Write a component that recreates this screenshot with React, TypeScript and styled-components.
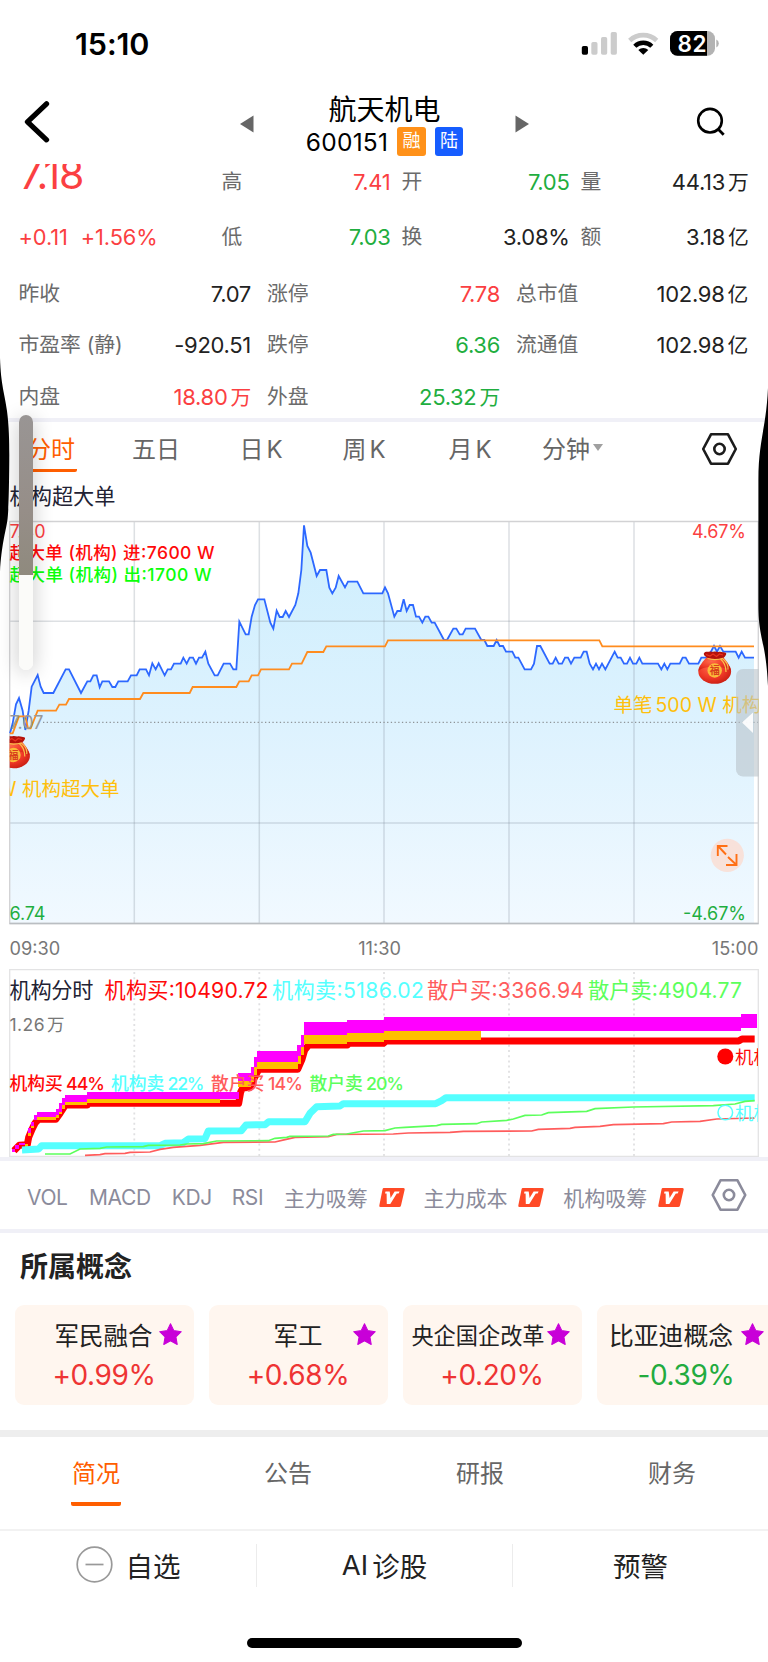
import React from 'react';
import styled, { createGlobalStyle, css } from 'styled-components';

const RED = '#fb3f42';
const GREEN = '#1fae3f';
const INK = '#222';
const ORANGE = '#ff5e00';
const FONT = 'Inter, "Noto Sans CJK SC", sans-serif';

const Global = createGlobalStyle`
  *, *::before, *::after { box-sizing: border-box; }
  html, body { margin: 0; background: #fff; }
  body { font-family: ${FONT}; color: ${INK}; -webkit-font-smoothing: antialiased; }
`;

const Screen = styled.main`
  position: relative;
  display: flex;
  flex-direction: column;
  width: 768px;
  height: 1662px;
  overflow: hidden;
  background: #fff;
`;

/* ---------- status bar ---------- */

const StatusBar = styled.header`
  display: flex;
  justify-content: space-between;
  height: 88px;
  padding: 0 48px 0 75px;
`;

const Clock = styled.div`
  padding-top: 26px;
  font-size: 30.5px;
  line-height: 36px;
  font-weight: 600;
  letter-spacing: -0.1px;
  color: #000;
`;

const StatusIcons = styled.svg`
  display: block;
  width: 140px;
  height: 88px;
`;

/* ---------- title bar ---------- */

const TitleBar = styled.div`
  display: grid;
  grid-template-columns: 240px 14px 261px 14px 239px;
  height: 76px;
`;

const TitleIcon = styled.svg`
  display: block;
  height: 76px;
  width: 100%;
`;

const TitleBlock = styled.div`
  display: flex;
  flex-direction: column;
  align-items: center;
  color: #000;
`;

const StockName = styled.h1`
  margin: 4px 0 -1px;
  font-size: 28px;
  line-height: 36px;
  font-weight: 400;
`;

const CodeLine = styled.div`
  display: flex;
  align-items: center;
  height: 29px;
  font-size: 24.5px;
  letter-spacing: 0.25px;
`;

const Badge = styled.span<{ $bg: string; $gap: number }>`
  width: 28.5px;
  height: 29px;
  margin-left: ${p => p.$gap}px;
  border-radius: 3px;
  background: ${p => p.$bg};
  color: #fff;
  font-size: 18px;
  line-height: 28px;
  letter-spacing: 0;
  text-align: center;
`;

/* ---------- quote table ---------- */

const Quote = styled.section`
  height: 254px;
  overflow: hidden;
`;

const QuoteRow = styled.div<{ $wide?: boolean; $h: number }>`
  display: grid;
  grid-template-columns: ${p =>
    p.$wide ? '232.5px 233px 232px' : '187px 174px 168px 168px'};
  column-gap: ${p => (p.$wide ? '16px' : '11px')};
  align-items: end;
  height: ${p => p.$h}px;
  padding: 0 19px 0 18.5px;
`;

const Cell = styled.div<{ $indent?: number }>`
  display: flex;
  justify-content: space-between;
  align-items: center;
  height: 32px;
  padding-left: ${p => p.$indent ?? 0}px;
  white-space: nowrap;
`;

const Label = styled.span`
  font-size: 20.8px;
  line-height: 32px;
  color: #6b6b6b;
`;

const Value = styled.span<{ $c?: string }>`
  font-size: 22px;
  line-height: 32px;
  letter-spacing: -0.3px;
  color: ${p => p.$c ?? INK};
`;

const Unit = styled.span`
  margin-left: 3px;
  font-size: 20.8px;
`;

const Price = styled.div`
  height: 32px;
  padding-left: 1px;
  font-size: 41px;
  line-height: 16px;
  letter-spacing: -1.2px;
  color: ${RED};
`;

const Change = styled.div`
  display: flex;
  gap: 13px;
  font-size: 21.8px;
  line-height: 32px;
  letter-spacing: -0.1px;
  color: ${RED};
`;

const Rule = styled.div<{ $h?: number; $c?: string }>`
  flex: none;
  height: ${p => p.$h ?? 4}px;
  background: ${p => p.$c ?? '#f0f0f7'};
`;

/* ---------- period tabs ---------- */

const PeriodTabs = styled.nav`
  display: grid;
  grid-template-columns: 105px 107.5px 103px 106px 93.5px 160px 1fr;
  height: 54px;
  padding-left: 27px;
`;

const Period = styled.div<{ $on?: boolean }>`
  display: flex;
  align-items: flex-start;
  gap: 3px;
  height: 50px;
  font-size: 24px;
  line-height: 55px;
  color: ${p => (p.$on ? ORANGE : '#666')};
`;

const PeriodText = styled.span<{ $on?: boolean }>`
  height: 50px;
  ${p =>
    p.$on &&
    css`
      border-bottom: 3.5px solid ${ORANGE};
      border-radius: 2px;
      padding-right: 2px;
    `}
`;

const Caret = styled.span`
  align-self: center;
  width: 0;
  margin-left: 0;
  border: 5px solid transparent;
  border-top: 7px solid #a0a0a0;
  border-bottom: 0;
`;

const ChartTitle = styled.div`
  height: 39px;
  padding-left: 9.5px;
  font-size: 21.2px;
  line-height: 41px;
  color: #222233;
`;

const Plot = styled.svg`
  display: block;
  flex: none;
  width: 768px;
  font-family: ${FONT};
`;

const TimeAxis = styled.div`
  display: grid;
  grid-template-columns: 250px 240px 1fr;
  height: 34px;
  padding: 0 9.5px;
  font-size: 18.2px;
  line-height: 34px;
  color: #777;
`;

const Tick = styled.span<{ $align: string }>`
  text-align: ${p => p.$align};
`;

/* ---------- indicators ---------- */

const Indicators = styled.nav`
  display: flex;
  align-items: center;
  height: 68px;
  padding: 4px 21px 0 27px;
  font-size: 21px;
  color: #8b8b9b;
`;

const Indicator = styled.span<{ $w: number; $ls?: number }>`
  display: flex;
  align-items: center;
  width: ${p => p.$w}px;
  white-space: nowrap;
  letter-spacing: ${p => p.$ls ?? 0}px;
`;

const VipIcon = styled.svg`
  width: 26px;
  height: 19px;
  margin-left: 11px;
`;

const IndicatorGear = styled.svg`
  width: 36px;
  height: 36px;
  margin: -5px 0 0 1px;
`;

/* ---------- concepts ---------- */

const SectionTitle = styled.h2`
  margin: 0;
  height: 72px;
  padding-left: 20px;
  font-size: 28px;
  line-height: 69px;
  font-weight: 700;
`;

const Cards = styled.div`
  display: flex;
  gap: 15px;
  height: 125px;
  padding-left: 14.5px;
`;

const Card = styled.article`
  position: relative;
  display: flex;
  flex: none;
  flex-direction: column;
  align-items: center;
  width: 179px;
  height: 100px;
  padding-top: 10px;
  border-radius: 9px;
  background: #fff6ef;
`;

const CardName = styled.div<{ $size: number; $pad: number }>`
  padding-right: ${p => p.$pad}px;
  font-size: ${p => p.$size}px;
  line-height: 42px;
  white-space: nowrap;
`;

const CardPct = styled.div<{ $c: string }>`
  font-size: 28px;
  line-height: 36px;
  letter-spacing: -0.4px;
  color: ${p => p.$c};
`;

const Star = styled.svg`
  position: absolute;
  top: 18px;
  right: 12px;
  width: 23px;
  height: 23px;
`;

/* ---------- bottom tabs and actions ---------- */

const InfoTabs = styled.nav`
  display: grid;
  grid-template-columns: repeat(4, 192px);
  justify-items: center;
  height: 92px;
`;

const InfoTab = styled.div<{ $on?: boolean }>`
  height: 69px;
  padding: 0 1px;
  font-size: 24px;
  line-height: 73px;
  color: ${p => (p.$on ? ORANGE : '#666')};
  ${p => p.$on && `border-bottom: 4px solid ${ORANGE}; border-radius: 2px;`}
`;

const Actions = styled.div`
  display: grid;
  grid-template-columns: repeat(3, 256px);
  height: 70px;
  padding-top: 13px;
`;

const Action = styled.div`
  display: flex;
  align-items: center;
  justify-content: center;
  gap: 4px;
  height: 43px;
  padding-bottom: 2px;
  font-size: 27.5px;
  & + & { border-left: 1px solid #ececec; }
`;

const MinusIcon = styled.svg`
  width: 37px;
  height: 37px;
  margin-right: 9px;
`;

const HomeBar = styled.div`
  width: 274.5px;
  height: 9.5px;
  margin: 37px 0 0 247px;
  border-radius: 5px;
  background: #000;
`;

/* ---------- overlays ---------- */

const VolumeSlider = styled.div`
  position: absolute;
  left: 19.3px;
  top: 414.5px;
  width: 13.7px;
  height: 255px;
  border-radius: 7px;
  overflow: hidden;
  background: #fbfbf9;
`;

const VolumeShadow = styled.div`
  position: absolute;
  left: 19.3px;
  top: 414.5px;
  width: 13.7px;
  height: 255px;
  border-radius: 7px;
  box-shadow: 0 3px 20px rgba(0, 0, 0, 0.24);
`;

const VolumeLevel = styled.div`
  height: 160px;
  background: linear-gradient(#999594, #968e88 60%, #8f8a7e);
`;

const EdgeShapes = styled.svg`
  position: absolute;
  left: 0;
  top: 340px;
  width: 768px;
  height: 360px;
  pointer-events: none;
`;

/* ---------- chart data, in thirds of a pixel ---------- */

type Pt = [number, number];

const parse = (s: string, dx = 0, dy = 0): Pt[] =>
  s.trim().split(/\s+/).map(p => {
    const [x, y] = p.split(',').map(Number);
    return [x + dx, y + dy] as Pt;
  });
const toPath = (pts: Pt[]) => 'M' + pts.map(p => p.join(' ')).join('L');

const PRICE_OPEN = `30,220 38,190 48,133 57,114 68,152 76,210 86,152 95,80 113,45 122,80 131,99 160,99 197,28 207,28
 243,99 262,64 271,64 280,46 290,46 299,82 307,64 327,64 337,81 346,81 355,64 383,64 393,46 410,46 419,28 438,28
 447,46 457,10 467,28 476,10 494,46`;
const PRICE_MORNING = `503,808 513,808 522,791 542,791 550,773 560,791 569,773 579,773 588,791 597,773 606,773 616,755
 625,791 644,826 653,826 671,791 690,791 700,808 709,808 718,665 737,703 746,703 755,650 765,615 774,598 793,598
 811,668 820,686 830,632 839,651 848,651 857,633 867,651 886,615 895,580 904,510 912,376 922,438 932,458 950,528
 960,510 979,510 988,563 997,580 1007,563 1016,528 1035,562 1044,545 1072,545 1090,580 1147,580`;
const PRICE_AFTERNOON = `51,562 60,580 79,650 88,633 98,633 107,598 116,633 125,615 135,615 144,650 153,650 163,668
 172,650 181,650 191,668 200,668 228,720 237,720 256,686 265,686 275,703 284,703 293,686 321,686 340,720 349,720
 358,738 377,738 386,720 395,738 405,738 414,755 433,755 442,773 451,773 470,808 489,808 498,791 507,738 517,738
 545,791 554,791 563,773 572,791 582,791 591,773 600,773 609,791 619,773 638,773 647,755 656,755 665,791 675,808
 684,791 693,808 702,791 712,808 740,755 749,773 758,773 768,791 777,791 786,773 795,791 805,791 814,773 823,791
 870,791 880,808 889,791 898,808 907,791 935,791 944,773 953,773 963,791 991,791 1000,773 1019,773 1038,738
 1047,755 1056,738 1066,755 1103,755 1112,773 1121,755 1131,773 1158,773`;
const price: Pt[] = [
  ...parse(PRICE_OPEN, 0, 780),
  ...parse(PRICE_MORNING),
  ...parse(PRICE_AFTERNOON, 1104),
];

const average: Pt[] = [
  ...parse(
    `30,220 38,220 57,169 76,169 84,205 92,205 113,152 168,152 178,134 198,134 207,117 420,117 430,99 569,99 578,81
     709,81 718,64 746,64 755,46 774,46 783,28 867,28 876,11 905,11 922,-24 970,-24 979,-41 1155,-41 1164,-59
     1798,-59 1807,-41 2262,-41`,
    0,
    780
  ),
];

const INST_BUY = `42,572 58,556 82,554 86,532 96,508 106,488 116,478 167,478 180,460 196,435 262,435 264,430 716,430
 722,396 728,384 750,382 764,352 776,328 893,328 906,298 914,270 926,255 1042,255 1046,250 1150,250 1158,243
 2216,243 2226,237 2264,237`;
const INST_SELL = `66,570 116,567 125,557 480,557 495,550 550,548 565,537 615,536 625,513 724,512 738,495 795,494
 806,485 915,485 930,460 950,440 1020,438 1030,431 1307,431 1325,422 1338,413 2264,413`;
const RETAIL_SELL = `135,582 210,582 240,567 300,565 320,561 430,560 445,556 540,555 560,552 610,551 650,543 805,542
 825,535 860,532 870,529 985,528 1000,523 1040,522 1090,513 1155,512 1185,504 1215,502 1310,497 1325,493 1430,491
 1445,486 1520,481 1540,477 1575,466 1625,465 1645,458 1760,454 1785,446 1900,441 2140,437 2205,432 2235,424
 2264,422`;
const RETAIL_BUY = `255,586 300,584 315,581 375,580 390,577 450,576 480,568 520,562 600,556 670,547 825,546 855,539
 885,532 985,530 1010,523 1180,522 1225,519 1350,517 1390,514 1595,513 1615,508 1710,505 1725,502 1800,499
 1840,494 1990,491 2015,486 2100,484 2150,477 2264,474`;

/* [x1, x2, top, bottom] */
const MAGENTA = [
  [36, 46, 566, 575], [46, 56, 556, 566], [56, 75, 549, 556], [83, 92, 505, 520], [92, 102, 485, 498],
  [102, 111, 465, 480], [110, 168, 456, 472], [168, 177, 446, 466], [177, 186, 430, 455], [186, 195, 413, 436],
  [194, 262, 405, 425], [261, 718, 397, 418], [715, 753, 339, 364], [752, 763, 322, 348], [762, 772, 291, 322],
  [771, 893, 273, 305], [892, 903, 256, 288], [902, 912, 226, 262], [911, 1042, 187, 226], [1041, 1153, 181, 220],
  [1152, 2224, 172, 212], [2222, 2270, 163, 204],
];
const GOLD = [
  [75, 84, 552, 560], [83, 92, 520, 528], [92, 102, 497, 505], [110, 168, 472, 480], [168, 177, 466, 473],
  [177, 186, 455, 463], [186, 195, 436, 446], [194, 262, 425, 436], [261, 660, 418, 430], [715, 753, 364, 381],
  [752, 763, 348, 365], [762, 772, 322, 345], [771, 893, 305, 328], [892, 903, 288, 312], [902, 912, 262, 286],
  [911, 1042, 226, 253], [1041, 1153, 220, 247], [1152, 1443, 212, 240],
];

const GRID_X = [134.3, 259.3, 384, 509, 634];

const Bars = ({ data, fill }: { data: number[][]; fill: string }) => (
  <g fill={fill} shapeRendering="crispEdges">
    {data.map(([a, b, t, u]) => (
      <rect key={a} x={a} y={t} width={b - a} height={u - t} />
    ))}
  </g>
);

const LuckyBag = ({ x, y }: { x: number; y: number }) => (
  <g transform={`translate(${x} ${y})`}>
    <ellipse cx="16.7" cy="20.500" rx="16.4" ry="12.300" fill="url(#bag)" />
    <path d="M9 6c-4 4-8 9-8.600 14C6 14 26 14 33 20 32 14 28 9 24 5z" fill="url(#bag)" />
    <path d="M6 2C7.500 0 9.500 1 11 .7c2-.8 3 .3 4.500 0 2-.5 3.500.1 5 .2 2-.5 3 .2 4.500.3 2 .2 4 .500 3 2.500-1 2-2 2.500-3 3.500-5 1.200-10 1.200-15-.2-2-1-5-3-4-5z" fill="#b5120c" />
    <path d="M8 3.500l4 1.500 3-2 3.500 2.500 3-2.500 3.500 1" fill="none" stroke="#e8321e" strokeWidth="1.300" />
    <path d="M9.500 7.500c5 1.400 11 1.200 15.500-.3M24.500 7.500c4 3 6 6 5.500 11M22.500 8c3.500 3 5.500 6 5.500 13" fill="none" stroke="#f8c24c" strokeWidth="1.200" />
    <circle cx="16.700" cy="19.500" r="7.200" fill="#fbbb3a" />
    <text x="16.700" y="23.300" fontSize="10" fontWeight="700" textAnchor="middle" fill="#d8401c">福</text>
  </g>
);

const HexNut = ({ cx, cy, color }: { cx: number; cy: number; color: string }) => (
  <g transform={`translate(${cx} ${cy})`} fill="none" stroke={color} strokeWidth="2.600" strokeLinejoin="round">
    <path d="M-8.500-14.700H8.500L16.300 0 8.500 14.700H-8.500L-16.300 0z" />
    <circle r="5.200" />
  </g>
);

const GearCell = styled.svg`
  display: block;
  width: 36px;
  height: 34px;
  margin-top: 9.5px;
`;

const VipMark = () => (
  <VipIcon viewBox="0 0 26 19">
    <path d="M4.500 0H24.500Q26 0 25.700 1.500L22 17.500Q21.700 19 20 19H1.500Q0 19 .3 17.500L3.500 1.500Q3.700 0 4.500 0z" fill="#ff4a26" />
    <path d="M6.500 3.500h4.200l.9 6.500 4-6.500h5l-1 2h-1.800L11.300 16H7.800L7.600 5.500H6z" fill="#fff" />
  </VipIcon>
);

const PriceChart = () => (
  <Plot height={416} viewBox="0 515 768 416">
    <defs>
      <linearGradient id="area" gradientUnits="userSpaceOnUse" x1="0" y1="372" x2="0" y2="1570">
        <stop offset="0" stopColor="#cdeefd" />
        <stop offset=".5" stopColor="#ddf2fe" />
        <stop offset="1" stopColor="#f1f9ff" />
      </linearGradient>
      <radialGradient id="bag" cx=".4" cy=".35" r=".7">
        <stop offset="0" stopColor="#ff6a4a" />
        <stop offset=".6" stopColor="#ee3726" />
        <stop offset="1" stopColor="#c81d12" />
      </radialGradient>
      <clipPath id="frame"><rect x="9.700" y="515" width="748.800" height="416" /></clipPath>
    </defs>
    <g transform="translate(0 400) scale(.333333)">
      <path d={toPath(price) + 'L2262 1570L30 1570Z'} fill="url(#area)" />
    </g>
    <g stroke="#788490" strokeOpacity=".25" strokeWidth="1.500" fill="none">
      {GRID_X.map(x => <path key={x} d={`M${x} 521.500V923.500`} />)}
      <path d="M9.700 621.300H758.500M9.700 823H758.500" />
    </g>
    <path d="M9.700 521.500H758.300V923.500H9.700z" fill="none" stroke="#d2d2d4" strokeWidth="1.300" />
    <path d="M9.700 923.500H758.500" stroke="#babec2" strokeWidth="1.300" />
    <path d="M43 722.300H758" stroke="#8f9498" strokeWidth="1.300" strokeDasharray="1.300 2.400" />
    <g transform="translate(0 400) scale(.333333)" fill="none" strokeWidth="5.400" strokeLinejoin="miter">
      <path d={toPath(price)} stroke="#2d68ff" />
      <path d={toPath(average)} stroke="#ff8c1e" />
    </g>
    <text x="9.500" y="729" fontSize="18" fill="#999" textLength="34">7.07</text>
    <g fontSize="18">
      <text x="9.500" y="537.500" fill={RED} textLength="36">7.40</text>
      <text x="746" y="537.500" fill={RED} textAnchor="end" textLength="54">4.67%</text>
      <text x="9.500" y="920" fill={GREEN} textLength="36">6.74</text>
      <text x="746" y="920" fill={GREEN} textAnchor="end" textLength="63">-4.67%</text>
    </g>
    <g fontSize="17.500" fontWeight="500">
      <text x="9.500" y="559" fill="#ff0a0a" textLength="205">超大单 (机构) 进:7600 W</text>
      <text x="9.500" y="580.500" fill="#0aff0a" textLength="202">超大单 (机构) 出:1700 W</text>
    </g>
    <g clipPath="url(#frame)">
      <LuckyBag x={-3.200} y={735.500} />
      <LuckyBag x={698} y={651} />
      <g fill="#ffbf0c" fontSize="19.500">
        <text x="119.500" y="796" textAnchor="end">W 机构超大单</text>
        <text x="613.500" y="711.500">单笔<tspan dx="3">500 W 机构超大单</tspan></text>
      </g>
    </g>
    <path d="M758.500 669H743a7 7 0 0 0-7 7V769.500a7 7 0 0 0 7 7H758.500z" fill="#b9c3ca" fillOpacity=".6" />
    <path d="M753 712.500V733L742 722.500z" fill="#fff" fillOpacity=".9" />
    <circle cx="727.300" cy="855.300" r="16.600" fill="#fadfd6" fillOpacity=".9" />
    <path d="M717.800 856V846H727.500M718 846L726 854.500M736.500 854V865H726M736 864.500L728 857" fill="none" stroke="#ff7015" strokeWidth="1.900" />
  </Plot>
);

const FlowChart = () => (
  <Plot height={192} viewBox="0 965 768 192">
    <defs>
      <clipPath id="flow"><rect x="9.700" y="965" width="748.300" height="192" /></clipPath>
    </defs>
    <path d="M9.700 1157V969.700H758.300V1157M9.700 1156.500H758.300" fill="none" stroke="#e3e3e4" strokeWidth="1.300" />
    <g stroke="#e0e0e2" strokeWidth="1.800" strokeDasharray="2 3.200">
      {GRID_X.map(x => <path key={x} d={`M${x} 972V1156`} />)}
    </g>
    <g transform="translate(0 960) scale(.333333)" fill="none">
      <path d={toPath(parse(INST_BUY))} stroke="#f00" strokeWidth="21" strokeLinejoin="round" />
      <Bars data={GOLD} fill="#ffbf00" />
      <Bars data={MAGENTA} fill="#f0f" />
      <path d={toPath(parse(INST_SELL))} stroke="#55ffff" strokeWidth="21" strokeLinejoin="round" />
      <path d={toPath(parse(RETAIL_BUY))} stroke="#ff5c5c" strokeWidth="5" />
      <path d={toPath(parse(RETAIL_SELL))} stroke="#5cff5c" strokeWidth="5" />
    </g>
    <g fontSize="21.200">
      <text x="9.500" y="998" fill="#222233" textLength="84">机构分时</text>
      <text x="104.500" y="998" fill="#ff0a0a" textLength="164">机构买:10490.72</text>
      <text x="272" y="998" fill="#55ffff" textLength="152">机构卖:5186.02</text>
      <text x="427" y="998" fill="#ff5c5c" textLength="157">散户买:3366.94</text>
      <text x="588" y="998" fill="#5cff5c" textLength="154">散户卖:4904.77</text>
    </g>
    <g fontSize="17.500" fill="#777">
      <text x="9.500" y="1031" textLength="35">1.26</text>
      <text x="47" y="1031" textLength="17">万</text>
    </g>
    <g fontSize="17.800" fontWeight="500">
      <text x="9.500" y="1090" fill="#ff0a0a">机构买</text>
      <text x="66" y="1090" fill="#ff0a0a" textLength="39">44%</text>
      <text x="111" y="1090" fill="#55ffff">机构卖</text>
      <text x="167.500" y="1090" fill="#55ffff" textLength="37">22%</text>
      <text x="211" y="1090" fill="#ff5c5c">散户买</text>
      <text x="268" y="1090" fill="#ff5c5c" textLength="35">14%</text>
      <text x="309.500" y="1090" fill="#5cff5c">散户卖</text>
      <text x="366" y="1090" fill="#5cff5c" textLength="38">20%</text>
    </g>
    <g clipPath="url(#flow)" fontSize="18.500">
      <circle cx="725.300" cy="1056.500" r="8" fill="#f00" />
      <text x="735" y="1063.500" fill="#ff0a0a">机构买</text>
      <circle cx="725.300" cy="1112.500" r="7.300" fill="none" stroke="#55ffff" strokeWidth="1.500" />
      <text x="735" y="1119.500" fill="#55ffff">机构卖</text>
    </g>
  </Plot>
);

const Num = ({ v, c }: { v: string; c?: string }) => {
  const unit = /[万亿]$/.test(v) ? v.slice(-1) : '';
  return (
    <Value $c={c}>
      {unit ? v.slice(0, -1) : v}
      {unit && <Unit>{unit}</Unit>}
    </Value>
  );
};

const Pair = ({ l, v, c, indent }: { l: string; v: string; c?: string; indent?: number }) => (
  <Cell $indent={indent}>
    <Label>{l}</Label>
    <Num v={v} c={c} />
  </Cell>
);

const CONCEPTS = [
  { name: '军民融合', pct: '+0.99%', size: 24.5, pad: 1 },
  { name: '军工', pct: '+0.68%', size: 24.5, pad: 0 },
  { name: '央企国企改革', pct: '+0.20%', size: 22.2, pad: 28 },
  { name: '比亚迪概念', pct: '-0.39%', size: 24.8, pad: 30 },
];

export default function App() {
  return (
    <>
      <Global />
      <Screen>
        <StatusBar>
          <Clock>15:10</Clock>
          <StatusIcons viewBox="580 0 140 88">
            <rect x="581.800" y="46" width="6.200" height="8.800" rx="1.700" fill="#000" />
            <rect x="591.300" y="42" width="6.200" height="12.800" rx="1.700" fill="#ccc" />
            <rect x="601" y="37" width="6.200" height="17.800" rx="1.700" fill="#ccc" />
            <rect x="610.700" y="32" width="6.200" height="22.800" rx="1.700" fill="#ccc" />
            <path d="M629.700 40.500a19.700 19.700 0 0 1 27 0" fill="none" stroke="#ccc" strokeWidth="4.600" />
            <path d="M634.800 46.300a12 12 0 0 1 17 0" fill="none" stroke="#000" strokeWidth="4.400" />
            <path d="M643.300 54.800L638.300 50a7.200 7.200 0 0 1 10 0z" fill="#000" />
            <clipPath id="battery"><rect x="670" y="31" width="45" height="24.700" rx="7.500" /></clipPath>
            <g clipPath="url(#battery)">
              <rect x="670" y="31" width="45" height="25" fill="#b3b3b3" />
              <rect x="670" y="31" width="37" height="25" fill="#000" />
            </g>
            <path d="M716.300 39.500q2.500 1.200 2.500 4t-2.500 4z" fill="#b3b3b3" />
            <text x="677.500" y="51.500" fontFamily={FONT} fontSize="22.500" fontWeight="600" fill="#fff" textLength="29">82</text>
          </StatusIcons>
        </StatusBar>

        <TitleBar>
          <TitleIcon viewBox="0 88 240 76">
            <path d="M46.500 103.800L27.500 121.800 46.500 139.800" fill="none" stroke="#000" strokeWidth="5.300" strokeLinecap="round" strokeLinejoin="round" />
          </TitleIcon>
          <TitleIcon viewBox="0 88 14 76"><path d="M13.500 115.500V132.500L0 124z" fill="#666" /></TitleIcon>
          <TitleBlock>
            <StockName>航天机电</StockName>
            <CodeLine>
              600151
              <Badge $bg="#ff9119" $gap={9}>融</Badge>
              <Badge $bg="#165dff" $gap={9}>陆</Badge>
            </CodeLine>
          </TitleBlock>
          <TitleIcon viewBox="0 88 14 76"><path d="M.5 115.500V132.500L14 124z" fill="#666" /></TitleIcon>
          <TitleIcon viewBox="529 88 239 76">
            <circle cx="710" cy="120.700" r="11.800" fill="none" stroke="#000" strokeWidth="2.600" />
            <path d="M718.500 129.500L723.700 134.700" stroke="#000" strokeWidth="2.800" />
          </TitleIcon>
        </TitleBar>

        <Quote>
          <QuoteRow $h={34}>
            <Price>7.18</Price>
            <Pair l="高" v="7.41" c={RED} indent={5} />
            <Pair l="开" v="7.05" c={GREEN} />
            <Pair l="量" v="44.13万" />
          </QuoteRow>
          <QuoteRow $h={55}>
            <Change><span>+0.11</span><span>+1.56%</span></Change>
            <Pair l="低" v="7.03" c={GREEN} indent={5} />
            <Pair l="换" v="3.08%" />
            <Pair l="额" v="3.18亿" />
          </QuoteRow>
          <QuoteRow $wide $h={57}>
            <Pair l="昨收" v="7.07" />
            <Pair l="涨停" v="7.78" c={RED} />
            <Pair l="总市值" v="102.98亿" />
          </QuoteRow>
          <QuoteRow $wide $h={51}>
            <Pair l="市盈率 (静)" v="-920.51" />
            <Pair l="跌停" v="6.36" c={GREEN} />
            <Pair l="流通值" v="102.98亿" />
          </QuoteRow>
          <QuoteRow $wide $h={52}>
            <Pair l="内盘" v="18.80万" c={RED} />
            <Pair l="外盘" v="25.32万" c={GREEN} />
          </QuoteRow>
        </Quote>
        <Rule />

        <PeriodTabs>
          <Period $on><PeriodText $on>分时</PeriodText></Period>
          <Period>五日</Period>
          <Period><span>日</span><span>K</span></Period>
          <Period><span>周</span><span>K</span></Period>
          <Period><span>月</span><span>K</span></Period>
          <Period>分钟<Caret /></Period>
          <GearCell viewBox="0 0 36 34"><HexNut cx={17.5} cy={17} color="#1c1c1c" /></GearCell>
        </PeriodTabs>
        <ChartTitle>机构超大单</ChartTitle>
        <PriceChart />
        <TimeAxis>
          <Tick $align="left">09:30</Tick>
          <Tick $align="center">11:30</Tick>
          <Tick $align="right">15:00</Tick>
        </TimeAxis>
        <FlowChart />
        <Rule />

        <Indicators>
          <Indicator $w={62} $ls={-0.4}>VOL</Indicator>
          <Indicator $w={83} $ls={-0.3}>MACD</Indicator>
          <Indicator $w={60} $ls={-0.4}>KDJ</Indicator>
          <Indicator $w={52} $ls={-0.4}>RSI</Indicator>
          <Indicator $w={140}>主力吸筹<VipMark /></Indicator>
          <Indicator $w={140}>主力成本<VipMark /></Indicator>
          <Indicator $w={147}>机构吸筹<VipMark /></Indicator>
          <IndicatorGear viewBox="0 0 36 36"><HexNut cx={18} cy={18} color="#8b8b9b" /></IndicatorGear>
        </Indicators>
        <Rule />

        <SectionTitle>所属概念</SectionTitle>
        <Cards>
          {CONCEPTS.map(c => (
            <Card key={c.name}>
              <CardName $size={c.size} $pad={c.pad}>{c.name}</CardName>
              <CardPct $c={c.pct[0] === '+' ? '#ee3434' : '#22ab3e'}>{c.pct}</CardPct>
              <Star viewBox="0 0 22 22">
                <path d="M11 .8L14.200 7.300 21.300 8.300 16.200 13.300 17.400 20.500 11 17.100 4.600 20.500 5.800 13.300.7 8.300 7.800 7.300z" fill="#c800d8" stroke="#c800d8" strokeLinejoin="round" />
              </Star>
            </Card>
          ))}
        </Cards>
        <Rule $h={7} $c="#eee" />

        <InfoTabs>
          <InfoTab $on>简况</InfoTab>
          <InfoTab>公告</InfoTab>
          <InfoTab>研报</InfoTab>
          <InfoTab>财务</InfoTab>
        </InfoTabs>
        <Rule $h={2} $c="#f2f2f2" />
        <Actions>
          <Action>
            <MinusIcon viewBox="0 0 37 37" fill="none" stroke="#999" strokeWidth="1.700">
              <circle cx="18.500" cy="18.500" r="17.300" />
              <path d="M9.500 18.500H27.500" />
            </MinusIcon>
            自选
          </Action>
          <Action><span>AI</span><span>诊股</span></Action>
          <Action>预警</Action>
        </Actions>
        <HomeBar />

        <VolumeShadow />
        <VolumeSlider><VolumeLevel /></VolumeSlider>
        <EdgeShapes viewBox="0 340 768 360">
          <path d="M0 358C.8 385 5 395 7 411S9.300 440 9.300 455 9 510 7.300 521 1.500 545 0 572z" fill="#000" />
          <path d="M768 388C766 430 758.400 440 758.400 480V605C758.400 640 766 640 768 686z" fill="#000" />
        </EdgeShapes>
      </Screen>
    </>
  );
}
